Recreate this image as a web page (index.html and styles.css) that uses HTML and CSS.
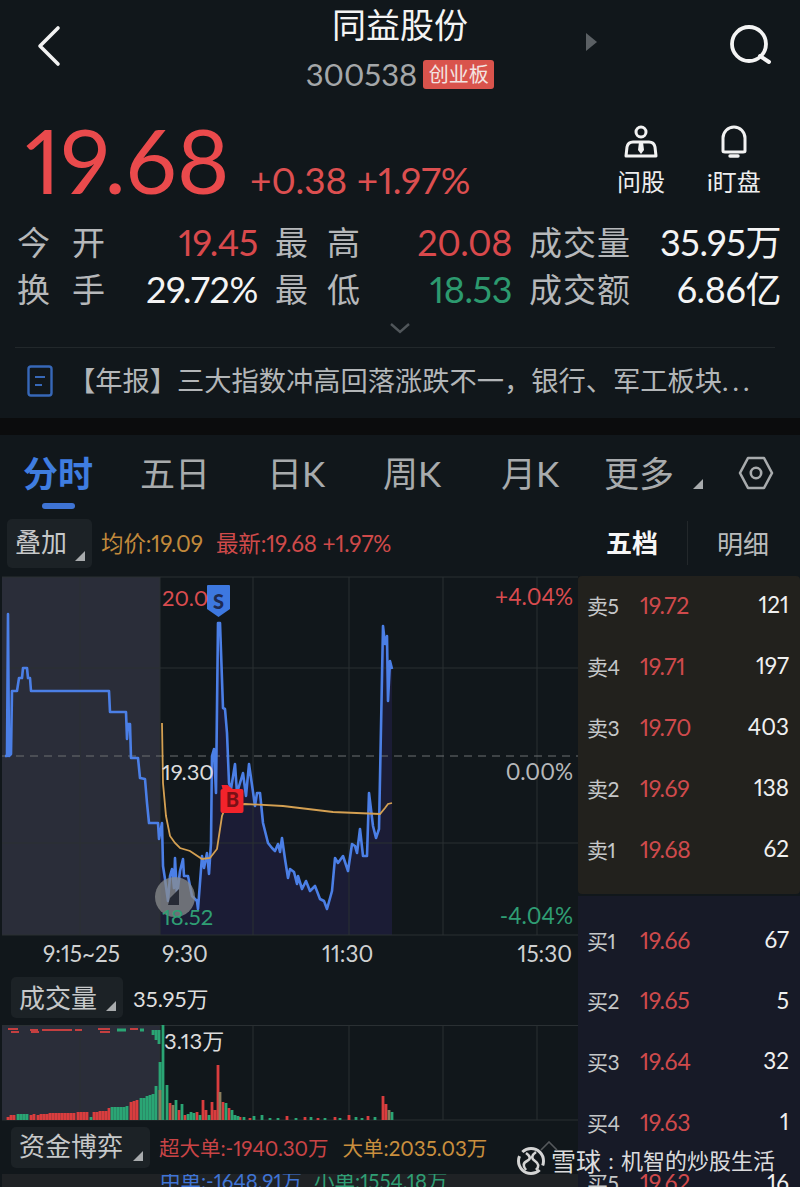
FILE: index.html
```html
<!DOCTYPE html>
<html lang="zh-CN">
<head>
<meta charset="utf-8">
<title>同益股份</title>
<link rel="stylesheet" href="styles.css">
</head>
<body>
<div class="page">
  <section class="quote">
    <header class="topbar">
      <svg class="back" width="26" height="42" viewBox="0 0 26 42"><path d="M22 3 4 21l18 18" fill="none" stroke="#f2f2f2" stroke-width="3.6" stroke-linecap="round" stroke-linejoin="round"/></svg>
      <div class="identity">
        <div class="name">同益股份</div>
        <div class="code-row"><span class="code">300538</span><span class="board">创业板</span></div>
      </div>
      <svg class="next" width="11" height="18" viewBox="0 0 11 18"><path d="M0 0 11 9 0 18z" fill="#5b6064"/></svg>
      <svg class="search" width="44" height="42" viewBox="0 0 44 42"><circle cx="20" cy="20" r="17" fill="none" stroke="#f4f4f4" stroke-width="3.8"/><path d="M31 32l9 6" stroke="#f4f4f4" stroke-width="4" stroke-linecap="round"/></svg>
    </header>

    <div class="price-row">
      <div class="price">19.68</div>
      <div class="change">+0.38 +1.97%</div>
      <div class="actions">
        <div class="action">
          <svg width="34" height="34" viewBox="0 0 34 34"><circle cx="17" cy="7" r="5" fill="none" stroke="#f2f2f2" stroke-width="3"/><path d="M2 31l1-9q1-5 6-5h16q5 0 6 5l1 9z" fill="none" stroke="#f2f2f2" stroke-width="3" stroke-linejoin="round"/><path d="M15 17h4l1 8-3 4-3-4z" fill="#f2f2f2"/></svg>
          <span>问股</span>
        </div>
        <div class="action">
          <svg width="34" height="34" viewBox="0 0 34 34"><path d="M6 26V13a11 11 0 0 1 22 0v13q0 1-2 1H8q-2 0-2-1z" fill="none" stroke="#f2f2f2" stroke-width="3"/><path d="M13 31h8" stroke="#f2f2f2" stroke-width="3.4" stroke-linecap="round"/></svg>
          <span>i盯盘</span>
        </div>
      </div>
    </div>

    <div class="stats">
      <span class="stat-label spaced"><i>今</i><i>开</i></span><span class="stat-value up">19.45</span>
      <span class="stat-label spaced inner"><i>最</i><i>高</i></span><span class="stat-value up">20.08</span>
      <span class="stat-label inner">成交量</span><span class="stat-value">35.95万</span>
      <span class="stat-label spaced"><i>换</i><i>手</i></span><span class="stat-value">29.72%</span>
      <span class="stat-label spaced inner"><i>最</i><i>低</i></span><span class="stat-value down">18.53</span>
      <span class="stat-label inner">成交额</span><span class="stat-value">6.86亿</span>
    </div>

    <svg class="expand" width="22" height="12" viewBox="0 0 22 12"><path d="M2 2l9 8 9-8" fill="none" stroke="#50565a" stroke-width="2.4"/></svg>

    <div class="news">
      <svg width="26" height="32" viewBox="0 0 26 32"><rect x="1.5" y="1.5" width="23" height="29" rx="2.5" fill="none" stroke="#3768b8" stroke-width="2.4"/><path d="M8 12h10M8 20h7" stroke="#3768b8" stroke-width="2.2"/></svg>
      <span class="headline">【年报】三大指数冲高回落涨跌不一，银行、军工板块<span class="dots">...</span></span>
    </div>
  </section>

  <section class="market">
    <nav class="tabs">
      <span class="tab active">分时</span>
      <span class="tab t2">五日</span>
      <span class="tab t3">日K</span>
      <span class="tab t4">周K</span>
      <span class="tab t5">月K</span>
      <span class="tab t6">更多</span>
      <i class="caret caret-more"></i>
      <svg class="hex" width="36" height="34" viewBox="0 0 36 34"><path d="M10 2h16l8 15-8 15H10L2 17z" fill="none" stroke="#a8abad" stroke-width="2.6" stroke-linejoin="round"/><circle cx="18" cy="17" r="5.2" fill="none" stroke="#a8abad" stroke-width="2.6"/></svg>
    </nav>

    <div class="toolbar">
      <div class="chip overlay-chip"><span>叠加</span><i class="caret"></i></div>
      <span class="legend avg">均价:19.09</span>
      <span class="legend last">最新:19.68 +1.97%</span>
      <div class="depth-tabs">
        <span class="depth-on">五档</span>
        <span class="depth-off">明细</span>
      </div>
    </div>

    <div class="board-grid">
      <div class="left">
        <div class="chart">
          <svg class="chart-svg" width="578" height="360" viewBox="0 0 578 360">
            <rect x="2" y="1" width="158" height="358" fill="#2a2d39"/>
            <path d="M160 247 162 247 163 290 165 303 168 325 170 300 172 293 174 312 175 282 177 320 180 295 183 283 184 300 188 300 192 320 197 325 198 333 202 280 204 292 207 277 209 298 211 267 212 180 214 173 216 217 218 47 220 47 223 132 225 133 227 157 229 207 231 213 235 188 237 217 243 197 246 220 249 188 255 230 257 217 260 217 263 247 268 267 272 272 275 275 278 268 280 276 282 262 285 283 288 302 290 293 294 296 297 308 298 300 302 313 306 305 310 315 315 310 320 323 324 325 327 333 332 315 335 282 338 287 343 280 348 295 352 268 355 270 357 277 360 253 363 280 367 280 369 217 373 250 376 262 379 253 383 50 385 68 387 60 388 125 390 85 392 93 392 359 160 359z" fill="#1b1c35"/>
            <path class="grid" d="M2 1H578M2 92H578M2 267H578M2 359H578M80 1V359M160 1V359M253 1V359M349 1V359M443 1V359M537 1V359"/>
            <path class="base" d="M2 180H578"/>
            <path class="price-line" d="M5 180 7 180 8 38 9 180 11 178 12 115 17 115 19 102 22 102 23 92 27 92 28 102 30 102 31 115 109 115 110 136 126 136 127 163 128 148 130 148 131 182 138 182 140 202 145 203 147 227 149 247 158 247 159 263 162 247 163 290 165 303 168 325 170 300 172 293 174 312 175 282 177 320 180 295 183 283 184 300 188 300 192 320 197 325 198 333 202 280 204 292 207 277 209 298 211 267 212 180 214 173 216 217 218 47 220 47 223 132 225 133 227 157 229 207 231 213 235 188 237 217 243 197 246 220 249 188 255 230 257 217 260 217 263 247 268 267 272 272 275 275 278 268 280 276 282 262 285 283 288 302 290 293 294 296 297 308 298 300 302 313 306 305 310 315 315 310 320 323 324 325 327 333 332 315 335 282 338 287 343 280 348 295 352 268 355 270 357 277 360 253 363 280 367 280 369 217 373 250 376 262 379 253 383 50 385 68 387 60 388 125 390 85 392 93"/>
            <path class="avg-line" d="M162 147 163 207 166 240 170 260 175 267 180 272 190 275 202 283 210 282 217 273 222 240 226 230 245 228 283 230 333 236 380 238 385 232 388 228 392 227"/>
            <path d="M207 10q0-1 1-1h21q1 0 1 1v23l-11.500 8-11.500-8z" fill="#3d78e0"/>
            <path d="M222 788h6l5 4h9q2 0 2 2v20q0 2-2 2h-19q-2 0-2-2v-20q0-2 2-2z" transform="translate(-.5 -579)" fill="#f2232b"/>
            <circle cx="175" cy="321" r="20" fill="#8a8c8d" fill-opacity=".75"/>
            <path d="M170 322l9-9v16h-11z" fill="#262a35"/>
          </svg>
          <span class="mark mark-s">S</span>
          <span class="mark mark-b">B</span>
          <span class="tag tag-high">20.0</span>
          <span class="tag tag-mid">19.30</span>
          <span class="tag tag-low">18.52</span>
          <span class="pct pct-up">+4.04%</span>
          <span class="pct pct-flat">0.00%</span>
          <span class="pct pct-down">-4.04%</span>
        </div>

        <div class="axis">
          <span>9:15~25</span><span>9:30</span><span>11:30</span><span>15:30</span>
        </div>

        <div class="sub-head">
          <div class="chip vol-chip"><span>成交量</span><i class="caret"></i></div>
          <span class="vol-total">35.95万</span>
        </div>

        <div class="volume">
          <svg width="578" height="96" viewBox="0 0 578 96">
            <rect x="2" y="1" width="158" height="94" fill="#2a2d39"/>
            <path class="grid" d="M2 .5H578M2 95H578M80 0V95M160 0V95M253 0V95M349 0V95M443 0V95M537 0V95"/>
            <path class="tick-red" d="M8 4h10M11 7h8M30 5h8M31 7h8M42 5h30M75 5h7M98 4h12M100 7h10M130 4h8"/>
            <path class="tick-green" d="M117 5h6M122 5h4M140 5h4M153 5v5M156 5v10M159 5v14"/>
            <path class="bar-red" d="M8 95v-3M11 95v-5M14 95v-5M31 95v-5M34 95v-6M38 95v-5M41 95v-6M44 95v-6M47 95v-6M50 95v-7M53 95v-7M56 95v-7M59 95v-7M62 95v-7M65 95v-7M68 95v-7M71 95v-7M74 95v-7M78 95v-8M81 95v-8M84 95v-8M87 95v-8M94 95v-8M97 95v-8M100 95v-9M103 95v-9M106 95v-9M109 95v-12M131 95v-18M134 95v-19M137 95v-20M170 95v-17M179 95v-10M185 95v-5M197 95v-8M203 95v-20M206 95v-10M212 95v-18M215 95v-10M218 95v-55M223 95v-18M229 95v-12M240 95v-3M250 95v-2M287 95v-4M305 95v-3M318 95v-2M335 95v-3M349 95v-5M368 95v-4M383 95v-24M386 95v-16"/>
            <path class="bar-green" d="M18 95v-6M21 95v-6M24 95v-6M27 95v-6M91 95v-3M112 95v-13M115 95v-13M118 95v-13M121 95v-13M124 95v-13M127 95v-14M141 95v-22M144 95v-22M147 95v-24M150 95v-25M153 95v-26M156 95v-34M160 95v-58M163 95v-95M167 95v-35M176 95v-20M182 95v-16M188 95v-6M191 95v-8M194 95v-7M200 95v-5M209 95v-5M226 95v-17M232 95v-10M235 95v-5M238 95v-4M244 95v-3M254 95v-4M262 95v-5M270 95v-2M278 95v-2M296 95v-2M311 95v-3M325 95v-2M340 95v-2M356 95v-3M362 95v-2M375 95v-3M392 95v-8"/>
            <path class="bar-olive" d="M160 95v-30M173 95v-15M220 95v-28M389 95v-10"/>
          </svg>
          <span class="vol-peak">3.13万</span>
        </div>

        <div class="funds-head">
          <div class="chip funds-chip"><span>资金博弈</span><i class="caret"></i></div>
          <span class="fund huge">超大单:-1940.30万</span>
          <span class="fund big">大单:2035.03万</span>
        </div>
        <div class="funds-foot">
          <span class="fund mid">中单:-1648.91万</span>
          <span class="fund small">小单:1554.18万</span>
        </div>
      </div>

      <aside class="book">
        <div class="side asks">
          <div class="level"><span class="lv-name">卖5</span><span class="lv-price">19.72</span><span class="lv-qty">121</span></div>
          <div class="level"><span class="lv-name">卖4</span><span class="lv-price">19.71</span><span class="lv-qty">197</span></div>
          <div class="level"><span class="lv-name">卖3</span><span class="lv-price">19.70</span><span class="lv-qty">403</span></div>
          <div class="level"><span class="lv-name">卖2</span><span class="lv-price">19.69</span><span class="lv-qty">138</span></div>
          <div class="level"><span class="lv-name">卖1</span><span class="lv-price">19.68</span><span class="lv-qty">62</span></div>
        </div>
        <div class="side bids">
          <div class="level"><span class="lv-name">买1</span><span class="lv-price">19.66</span><span class="lv-qty">67</span></div>
          <div class="level"><span class="lv-name">买2</span><span class="lv-price">19.65</span><span class="lv-qty">5</span></div>
          <div class="level"><span class="lv-name">买3</span><span class="lv-price">19.64</span><span class="lv-qty">32</span></div>
          <div class="level"><span class="lv-name">买4</span><span class="lv-price">19.63</span><span class="lv-qty">1</span></div>
          <div class="level"><span class="lv-name">买5</span><span class="lv-price">19.62</span><span class="lv-qty">16</span></div>
        </div>
      </aside>
    </div>
  </section>

  <div class="stamp">
    <svg class="stamp-logo" width="30" height="30" viewBox="0 0 30 30"><circle cx="15" cy="15" r="12.500" fill="none" stroke="#d4d4d4" stroke-width="3" stroke-dasharray="34 5 34 5.500" stroke-dashoffset="-10"/><path d="M10 7q7 5 1 8t-1 9M20 6q-7 5-1 9t1 9" fill="none" stroke="#d4d4d4" stroke-width="2.600"/></svg>
    <span class="stamp-site">雪球</span><span class="stamp-sep">:</span><span class="stamp-user">机智的炒股生活</span>
    <svg class="stamp-up" width="18" height="10" viewBox="0 0 18 10"><path d="M1 9l8-8 8 8" fill="none" stroke="#55595c" stroke-width="1.600"/></svg>
  </div>
</div>
</body>
</html>
```

FILE: styles.css
```css
* { box-sizing: border-box; }
html, body { margin: 0; padding: 0; background: #0b0c0d; }
body { font-family: Lato, "Noto Sans CJK SC", sans-serif; font-variant-numeric: proportional-nums; color: #e8e8e8; }
i { font-style: normal; }

.page { position: relative; width: 800px; height: 1187px; overflow: hidden; }

/* quote header */
.quote { height: 418px; background: #11171b; padding-top: 6px; }
.topbar { position: relative; height: 90px; display: flex; justify-content: center; }
.back { position: absolute; left: 36px; top: 19px; }
.next { position: absolute; left: 586px; top: 27px; }
.search { position: absolute; left: 729px; top: 18px; }
.identity { display: flex; flex-direction: column; align-items: center; }
.name { font-size: 34px; line-height: 38px; color: #f4f4f4; }
.code-row { display: flex; align-items: center; gap: 6px; margin-top: 13px; }
.code { font-size: 31px; line-height: 34px; color: #a4a7a9; }
.board { width: 71px; height: 29px; border-radius: 3px; background: #d9534c; color: #f3e4e2; font-size: 20px; line-height: 28px; text-align: center; }

.price-row { height: 123px; display: flex; align-items: flex-start; padding-left: 25px; padding-top: 19px; }
.price { font-size: 90px; line-height: 88px; color: #ea4a4c; width: 225px; }
.change { font-size: 37px; line-height: 42px; color: #dc4f50; margin-top: 44px; white-space: nowrap; }
.actions { margin-left: auto; margin-right: 38px; display: flex; gap: 37px; margin-top: 10px; }
.action { display: flex; flex-direction: column; align-items: center; width: 56px; gap: 7px; font-size: 24px; line-height: 32px; color: #eeeeee; white-space: nowrap; }
.action:first-child { margin-left: 3px; }

.stats { display: grid; grid-template-columns: 88px 153px 102px 152px 119px 150px; grid-auto-rows: 47px; padding-left: 17px; }
.stat-label { font-size: 33px; line-height: 47px; color: #b6b8ba; white-space: nowrap; letter-spacing: 1px; }
.stat-label.spaced { display: flex; justify-content: space-between; letter-spacing: 0; }
.stat-label.inner { padding-left: 17px; }
.stat-value { font-size: 36px; line-height: 47px; text-align: right; color: #f4f4f4; white-space: nowrap; letter-spacing: -.4px; }
.up { color: #d9494c; }
.down { color: #2c9a6f; }

.expand { display: block; margin: 9px auto 0 389px; }
.news { margin: 13px 25px 0 15px; padding: 9px 0 0 12px; border-top: 1px solid #22282b; display: flex; align-items: center; gap: 22px; height: 57px; }
.headline { margin-left: -7px; font-size: 27.250px; line-height: 36px; color: #b3b6b8; white-space: nowrap; }
.dots { letter-spacing: 4px; }

/* period tabs */
.market { margin-top: 17px; background: #11171b; height: 752px; }
.tabs { position: relative; height: 83px; }
.tab { position: absolute; top: 16px; font-size: 35px; line-height: 44px; color: #a8abad; white-space: nowrap; }
.tab.active { left: 23px; color: #3f7de0; font-weight: 700; }
.tab.active::after { content: ""; position: absolute; left: 19px; top: 52px; width: 33px; height: 6px; border-radius: 3px; background: #3f74d4; }
.t2 { left: 140px; }
.t3 { left: 267px; }
.t4 { left: 383px; }
.t5 { left: 501px; }
.t6 { left: 604px; }
.caret { display: block; width: 0; height: 0; border-style: solid; border-width: 0 0 10px 10px; border-color: transparent transparent #a8abad transparent; flex: none; }
.caret-more { position: absolute; left: 693px; top: 44px; }
.hex { position: absolute; left: 738px; top: 21px; }

.toolbar { height: 58px; display: flex; align-items: center; padding-left: 7px; }
.chip { display: flex; align-items: center; background: #1c2226; border-radius: 5px; font-size: 26px; color: #c6c8c9; position: relative; white-space: nowrap; }
.chip .caret { position: absolute; right: 7px; bottom: 7px; }
.chip > span { margin-top: -3px; }
.overlay-chip { width: 85px; height: 49px; padding-left: 8px; margin-top: -7px; }
.overlay-chip > span, .funds-chip > span { margin-top: -6px; }
.legend { font-size: 22.500px; line-height: 28px; margin-top: -6px; white-space: nowrap; letter-spacing: -.1px; }
.avg { margin-left: 9px; color: #c28a3c; }
.last { margin-left: 13px; color: #cf4a4a; }
.depth-tabs { margin-left: auto; display: flex; align-items: center; margin-right: 31px; font-size: 26px; margin-top: -9px; }
.depth-on { color: #f6f6f6; font-weight: 700; padding-right: 29px; border-right: 1px solid #23282b; line-height: 44px; }
.depth-off { color: #b9bbbc; padding-left: 29px; }

.board-grid { display: flex; }
.left { width: 578px; flex: none; }

/* intraday chart: labels sit on the drawing */
.chart { position: relative; height: 360px; }
.chart-svg { display: block; }
.grid { fill: none; stroke: #2a3033; stroke-width: 1; }
.base { fill: none; stroke: #6d7072; stroke-width: 1; stroke-dasharray: 8 6; }
.price-line { fill: none; stroke: #4b7fe6; stroke-width: 2.600; stroke-linejoin: round; }
.avg-line { fill: none; stroke: #d4a052; stroke-width: 1.800; }
.mark { position: absolute; font-size: 20px; font-weight: 900; line-height: 20px; text-align: center; width: 23px; }
.mark-s { left: 207px; top: 15px; color: #1e2a52; }
.mark-b { left: 221px; top: 213px; color: #7a1015; }
.tag { position: absolute; left: 162px; font-size: 22px; line-height: 26px; white-space: nowrap; }
.tag-high { top: 9px; color: #d94c4f; }
.tag-mid { top: 183px; color: #dcdcdc; }
.tag-low { top: 328px; color: #2f9e74; }
.pct { position: absolute; right: 5px; font-size: 22.500px; line-height: 26px; white-space: nowrap; }
.pct-up { top: 8px; color: #d94c4f; }
.pct-flat { top: 183px; color: #b6b8ba; }
.pct-down { top: 327px; color: #2f9e74; }

.axis { height: 41px; display: grid; grid-template-columns: 119px 160px 1fr auto; padding: 4px 6px 0 43px; font-size: 22.500px; line-height: 28px; color: #cfd1d2; }

.sub-head { height: 48px; display: flex; align-items: flex-start; padding-left: 11px; }
.vol-chip { width: 112px; height: 41px; padding-left: 8px; }
.vol-total { margin-left: 10px; font-size: 22px; line-height: 44px; color: #dedede; white-space: nowrap; }

.volume { position: relative; height: 96px; }
.volume svg { display: block; }
.tick-red { fill: none; stroke: #c43f40; stroke-width: 2; }
.tick-green { fill: none; stroke: #2aa574; stroke-width: 2.800; }
.bar-red { fill: none; stroke: #d93d3e; stroke-width: 2.800; }
.bar-green { fill: none; stroke: #2aa574; stroke-width: 2.800; }
.bar-olive { fill: none; stroke: #8a7d5c; stroke-width: 2.800; }
.vol-peak { position: absolute; left: 164px; top: 2px; font-size: 22px; line-height: 28px; color: #dcdcdc; white-space: nowrap; }

.funds-head { height: 53px; display: flex; align-items: flex-start; padding: 6px 0 0 11px; }
.funds-chip { width: 139px; height: 41px; padding-left: 8px; }
.fund { font-size: 20.500px; line-height: 28px; white-space: nowrap; }
.huge { margin-left: 9px; margin-top: 7px; color: #c94446; }
.big { margin-left: 14px; margin-top: 7px; color: #c98f3e; }
.funds-foot { height: 14px; margin-left: 2px; padding-left: 158px; background: #1f2225; display: flex; gap: 12px; align-items: flex-start; overflow: hidden; }
.funds-foot .fund { margin-top: -7px; }
.mid { color: #3f74d4; }
.small { color: #2f9e74; }

/* five-level order book */
.book { flex: 1; min-width: 0; }
.side { display: flex; flex-direction: column; }
.asks { height: 318px; background: #22211d; border-radius: 4px; }
.bids { margin-top: 2px; padding-top: 15.500px; height: 320px; background: #171a27; }
.level { height: 61px; flex: none; display: flex; align-items: center; padding: 0 11px 4px 9px; white-space: nowrap; }
.bids .level { height: 60.600px; }
.lv-name { width: 53px; font-size: 21px; color: #c5c7c8; letter-spacing: -.5px; }
.lv-price { font-size: 23px; color: #cf4a4c; letter-spacing: -.4px; }
.lv-qty { margin-left: auto; font-size: 22.500px; color: #f0f0f0; }

/* author watermark over the corner */
.stamp { position: absolute; left: 516px; top: 1146px; display: flex; align-items: center; line-height: 30px; color: rgba(240, 240, 240, .92); white-space: nowrap; }
.stamp-logo { margin-right: 5px; }
.stamp-site { font-size: 25px; }
.stamp-sep { width: 20px; text-align: center; font-size: 22px; }
.stamp-user { font-size: 22px; }
.stamp-up { position: absolute; left: 24px; top: -5px; }
```
